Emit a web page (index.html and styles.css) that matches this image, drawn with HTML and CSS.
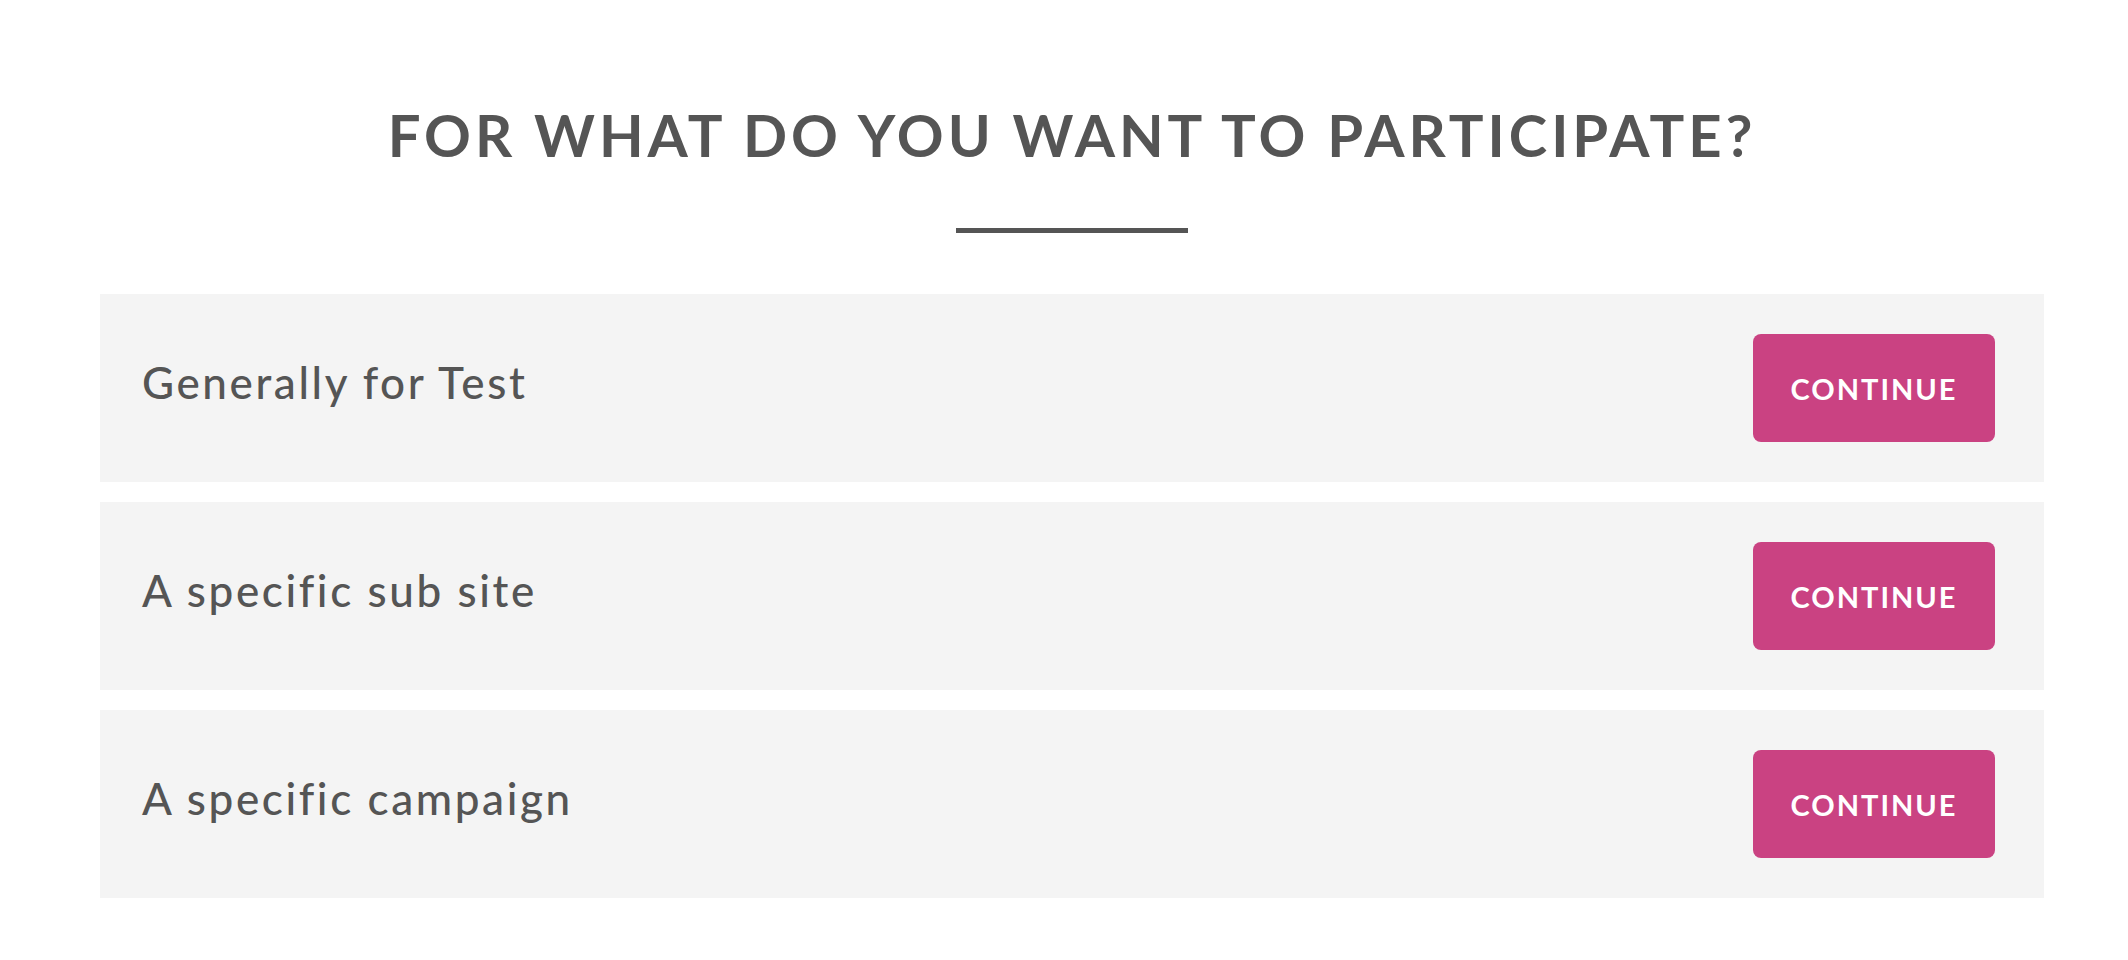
FILE: index.html
```html
<!DOCTYPE html>
<html>
<head>
    <title>Participate</title>
    <link rel="stylesheet" href="styles.css">
</head>
<body>
    <div class="container">
        <h1>For what do you want to participate?</h1>
        <div class="divider"></div>
        <div class="options">
            <div class="option">
                <span class="option-label">Generally for Test</span>
                <button class="continue">Continue</button>
            </div>
            <div class="option">
                <span class="option-label">A specific sub site</span>
                <button class="continue">Continue</button>
            </div>
            <div class="option">
                <span class="option-label">A specific campaign</span>
                <button class="continue">Continue</button>
            </div>
        </div>
    </div>
</body>
</html>
```

FILE: styles.css
```css
body {
    font-family: Lato, "Open Sans", Arial, sans-serif;
    background-color: #fff;
    color: #555;
    margin: 0;
}

.container {
    padding: 100px 84px 0 100px;
}

h1 {
    margin: 0;
    font-size: 58px;
    line-height: 70px;
    font-weight: 700;
    text-transform: uppercase;
    letter-spacing: 4px;
    text-align: center;
    color: #555;
}

.divider {
    width: 232px;
    height: 5px;
    background-color: #555;
    margin: 58px auto 61px;
}

.options {
    display: flex;
    flex-direction: column;
    gap: 20px;
}

.option {
    display: flex;
    align-items: center;
    justify-content: space-between;
    background-color: #f4f4f4;
    padding: 40px 49px 40px 42px;
}

.option-label {
    font-size: 44px;
    font-weight: 500;
    line-height: 50px;
    letter-spacing: 2.6px;
    padding-bottom: 12px;
}

.continue {
    width: 242px;
    height: 108px;
    background-color: #ca4282;
    color: #fff;
    border: none;
    border-radius: 8px;
    font-family: inherit;
    font-size: 29px;
    font-weight: 700;
    letter-spacing: 2px;
    text-transform: uppercase;
    cursor: pointer;
}
```
